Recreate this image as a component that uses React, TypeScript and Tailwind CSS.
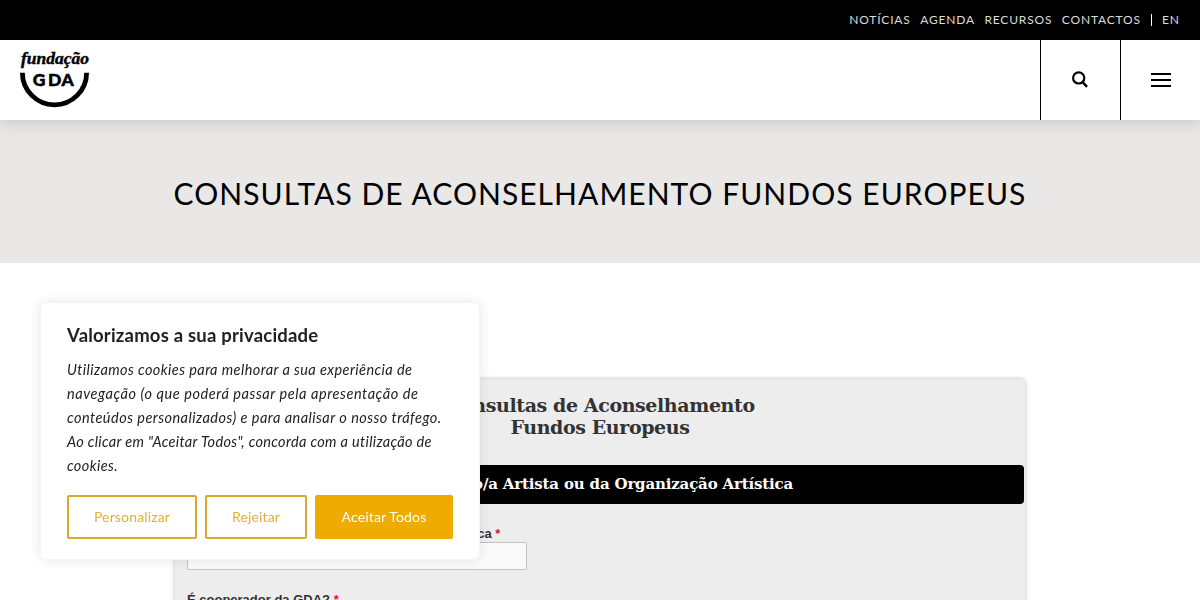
import { useState } from 'react';

const topLinks = ['Notícias', 'Agenda', 'Recursos', 'Contactos'];

function Logo() {
  return (
    <svg width="70" height="58" viewBox="0 0 70 58" aria-label="Fundação GDA">
      <text
        x="1"
        y="14.3"
        textLength="68"
        lengthAdjust="spacingAndGlyphs"
        stroke="#000"
        strokeWidth="0.4"
        className="font-['Liberation_Serif',serif] text-[16px] font-bold italic"
      >
        fundação
      </text>
      <text
        x="12.7 28 41.4"
        y="35.6"
        stroke="#000"
        strokeWidth="0.5"
        className="font-['Lato',sans-serif] text-[17.5px] font-black"
      >
        GDA
      </text>
      <path d="M2.4 22.7 A32.1 32.1 0 0 0 66.6 22.7" fill="none" stroke="#000" strokeWidth="4.8" />
    </svg>
  );
}

function TopBar() {
  return (
    <nav className="flex h-10 items-center justify-end bg-black pr-5 font-['Lato',sans-serif] text-[12px] leading-none text-[#dcdcdc] uppercase">
      <div className="flex gap-[9.5px] tracking-[0.83px]">
        {topLinks.map((link) => (
          <a key={link} href="#">
            {link}
          </a>
        ))}
      </div>
      <span className="mr-[10px] ml-[10px] h-3 w-px bg-white" />
      <a href="#" className="tracking-[1px]">
        EN
      </a>
    </nav>
  );
}

function Header() {
  return (
    <header className="relative flex h-20 justify-between bg-white shadow-[0_0_18px_rgba(0,0,0,0.18)]">
      <a href="#" className="pt-[10px] pl-5">
        <Logo />
      </a>
      <div className="flex">
        <button className="flex w-20 items-center justify-center border-l border-black pr-px pb-px">
          <svg width="16" height="17" viewBox="0 0 16 17" fill="none" stroke="#000" strokeWidth="2.2">
            <circle cx="6.7" cy="6.9" r="5.6" />
            <path d="M10.6 11 L15 15.8" strokeWidth="2.5" />
          </svg>
        </button>
        <button className="flex w-20 flex-col items-center justify-center gap-1 border-l border-black">
          <span className="h-0.5 w-5 bg-black" />
          <span className="h-0.5 w-5 bg-black" />
          <span className="h-0.5 w-5 bg-black" />
        </button>
      </div>
    </header>
  );
}

function RequiredLabel({ children }: { children: string }) {
  return (
    <label className="block font-['Liberation_Sans',sans-serif] text-[13px] leading-4 font-bold whitespace-nowrap text-[#333]">
      {children} <span className="text-[#e0102f]">*</span>
    </label>
  );
}

function ConsultForm() {
  return (
    <form className="mx-auto mt-[116px] h-[400px] w-[850px] rounded-[4px] bg-[#ededed] shadow-[0_0_4px_rgba(0,0,0,0.28)]">
      <h2 className="pt-[15px] text-center font-['DejaVu_Serif',serif] text-[19px] leading-[22px] font-bold tracking-[-0.4px] text-[#333]">
        Consultas de Aconselhamento
        <br />
        Fundos Europeus
      </h2>
      <h3 className="mx-px mt-[27px] h-[39px] rounded-[4px] bg-black text-center font-['DejaVu_Serif',serif] text-[15px] leading-[39px] font-bold tracking-[-0.17px] text-white">
        Dados do/a Artista ou da Organização Artística
      </h3>
      <div className="px-3 pt-[22px]">
        <RequiredLabel>Nome do/da Artista e/ou da Organização Artística</RequiredLabel>
        <input className="block h-7 w-[340px] rounded-[2px] border border-[#c3c3c3] bg-[#fafafa]" />
        <div className="mt-[22px]">
          <RequiredLabel>É cooperador da GDA?</RequiredLabel>
        </div>
      </div>
    </form>
  );
}

function CookieNotice({ onClose }: { onClose: () => void }) {
  return (
    <div className="fixed bottom-10 left-10 h-[258px] w-[440px] rounded-[6px] border border-[#f4f4f4] bg-white px-[26px] pt-5 font-['Lato',sans-serif] text-[#212121] shadow-[0_0_12px_rgba(0,0,0,0.1)]">
      <p className="text-[18.5px] leading-6 font-bold tracking-[0.2px]">Valorizamos a sua privacidade</p>
      <p className="mt-[11px] text-[14.5px] leading-6 whitespace-nowrap italic">
        <span className="block tracking-[0.42px]">Utilizamos cookies para melhorar a sua experiência de</span>
        <span className="block tracking-[0.57px]">navegação (o que poderá passar pela apresentação de</span>
        <span className="block tracking-[0.47px]">conteúdos personalizados) e para analisar o nosso tráfego.</span>
        <span className="block tracking-[0.33px]">Ao clicar em "Aceitar Todos", concorda com a utilização de</span>
        <span className="block tracking-[0.4px]">cookies.</span>
      </p>
      <div className="mt-[17px] flex gap-2 text-[14px] tracking-[0.15px]">
        <button onClick={onClose} className="h-11 w-[130px] rounded-[2px] border-2 border-[#d9a92b] pb-0.5 text-[#dfb03c]">
          Personalizar
        </button>
        <button onClick={onClose} className="h-11 w-[102px] rounded-[2px] border-2 border-[#d9a92b] pb-0.5 text-[#dfb03c]">
          Rejeitar
        </button>
        <button onClick={onClose} className="h-11 w-[138px] rounded-[2px] bg-[#f0ab00] pb-0.5 text-white">
          Aceitar Todos
        </button>
      </div>
    </div>
  );
}

export default function App() {
  const [showCookies, setShowCookies] = useState(true);

  return (
    <div className="h-[600px] overflow-hidden bg-white">
      <TopBar />
      <Header />
      <section className="flex h-[143px] items-center justify-center bg-[#eae8e6]">
        <h1 className="pt-0.5 font-['Lato',sans-serif] text-[30px] leading-9 tracking-[1.05px] whitespace-nowrap text-black uppercase">
          Consultas de Aconselhamento Fundos Europeus
        </h1>
      </section>
      <ConsultForm />

      {/* Cookie consent */}
      {showCookies && <CookieNotice onClose={() => setShowCookies(false)} />}
    </div>
  );
}
